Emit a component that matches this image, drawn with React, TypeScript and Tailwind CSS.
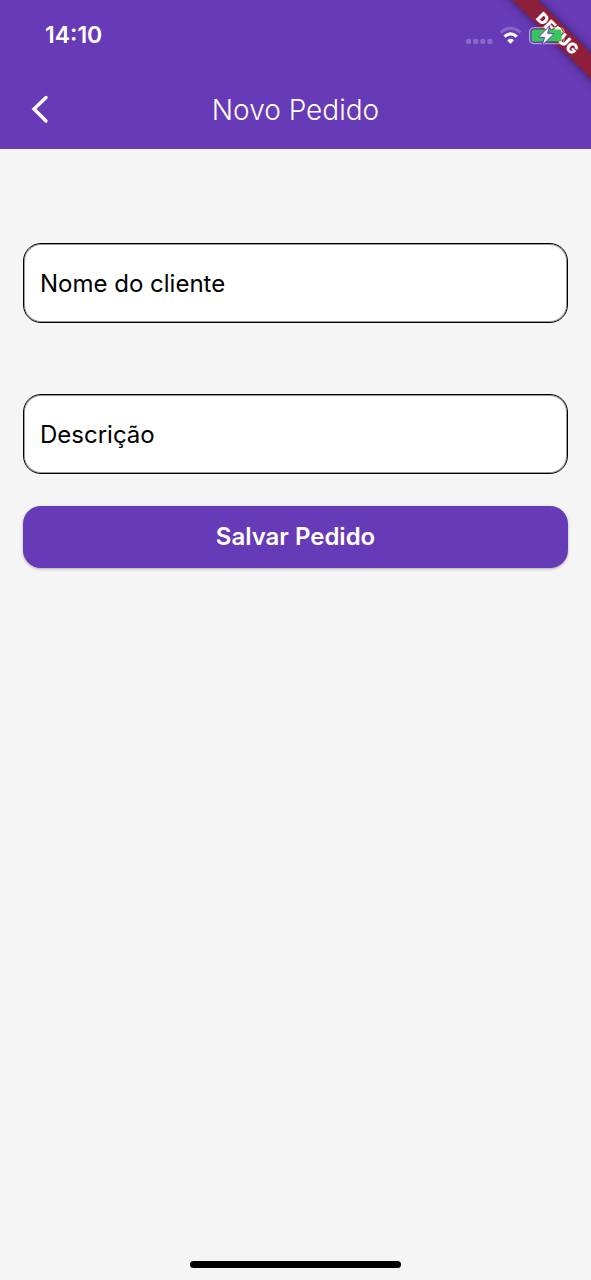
import { useState, type FormEvent, type InputHTMLAttributes } from "react";

function StatusIcons() {
  return (
    <svg
      className="relative z-10 h-6 w-[106px]"
      viewBox="0 0 106 24"
      fill="none"
      aria-hidden="true"
    >
      <g fill="#fff" fillOpacity="0.24">
        <rect x="1" y="16" width="5" height="5" rx="1.5" />
        <rect x="8.2" y="16" width="5" height="5" rx="1.5" />
        <rect x="15.3" y="16" width="5" height="5" rx="1.5" />
        <rect x="22.3" y="16" width="5" height="5" rx="1.5" />
      </g>
      <path
        d="M35.8 9.4 Q45.5 1.2 55.6 9.4"
        stroke="#fff"
        strokeOpacity="0.22"
        strokeWidth="3"
      />
      <path d="M39.4 13.6 Q45.5 8.2 51.8 13.6" stroke="#fff" strokeWidth="3.2" />
      <path
        d="M42.2 17.2 Q45.5 14.4 48.9 17.2 L46.2 20.2 Q45.5 20.8 44.8 20.2 Z"
        fill="#fff"
      />
      <rect
        x="64.6"
        y="4.6"
        width="34.5"
        height="16"
        rx="4.5"
        stroke="#fff"
        strokeOpacity="0.5"
        strokeWidth="1.3"
      />
      <rect x="66.6" y="6.6" width="30" height="12" rx="2.6" fill="#34c759" />
      <path
        d="M84.8 2.6 L73.6 14 L79.6 14.6 L77 22.4 L89 10.8 L82.6 10.2 Z"
        fill="#fff"
        stroke="#673ab7"
        strokeWidth="1"
      />
    </svg>
  );
}

function DebugBanner() {
  return (
    <div
      className="pointer-events-none absolute top-0 right-0 size-24 overflow-hidden"
      aria-hidden="true"
    >
      <div className="absolute -top-[14px] -right-[47px] flex h-[94px] w-40 rotate-45 items-center">
        <span className="flex h-[18px] w-full items-center justify-center bg-[#8e1f3b] text-[15px] leading-none font-black text-white shadow-[0_0_9px_rgba(0,0,0,0.5)]">
          DEBUG
        </span>
      </div>
    </div>
  );
}

function Field(props: InputHTMLAttributes<HTMLInputElement>) {
  return (
    <input
      {...props}
      aria-label={props.placeholder}
      className="h-20 w-full rounded-[18px] border border-black bg-white px-4 text-2xl text-black shadow-[inset_0_0_0_1px_rgba(0,0,0,0.4)] outline-none placeholder:text-black placeholder:opacity-100"
    />
  );
}

export default function App() {
  const [customer, setCustomer] = useState("");
  const [description, setDescription] = useState("");

  const save = (event: FormEvent) => event.preventDefault();

  return (
    <div className="flex min-h-screen flex-col bg-[#f5f5f5] font-['Inter',sans-serif]">
      <header className="relative bg-[#673ab7] text-white">
        <DebugBanner />
        <div className="flex h-[70px] items-center justify-between pr-5 pl-[45px]">
          <span className="text-[23px] font-semibold">14:10</span>
          <StatusIcons />
        </div>
        <div className="grid h-[79px] grid-cols-[80px_1fr_80px] items-center">
          <button type="button" aria-label="Voltar" className="flex h-full items-center pl-7">
            <svg className="h-8 w-6" viewBox="0 0 24 32" fill="none" aria-hidden="true">
              <path
                d="M18 3.5 L6 15 L18 27"
                stroke="#fff"
                strokeWidth="3.4"
                strokeLinecap="round"
                strokeLinejoin="miter"
              />
            </svg>
          </button>
          <h1 className="text-center text-[28px] font-light">Novo Pedido</h1>
        </div>
      </header>

      <form onSubmit={save} className="flex flex-col px-[23px] pt-[94px]">
        <Field
          placeholder="Nome do cliente"
          value={customer}
          onChange={(event) => setCustomer(event.target.value)}
        />
        <div className="mt-[71px]">
          <Field
            placeholder="Descrição"
            value={description}
            onChange={(event) => setDescription(event.target.value)}
          />
        </div>
        <button
          type="submit"
          className="mt-8 h-[62px] rounded-[18px] bg-[#673ab7] text-2xl font-semibold text-white shadow-[0_1px_3px_rgba(0,0,0,0.3)]"
        >
          Salvar Pedido
        </button>
      </form>

      <div className="mt-auto flex justify-center pb-3">
        <span className="h-[7px] w-[211px] rounded-full bg-black" />
      </div>
    </div>
  );
}
